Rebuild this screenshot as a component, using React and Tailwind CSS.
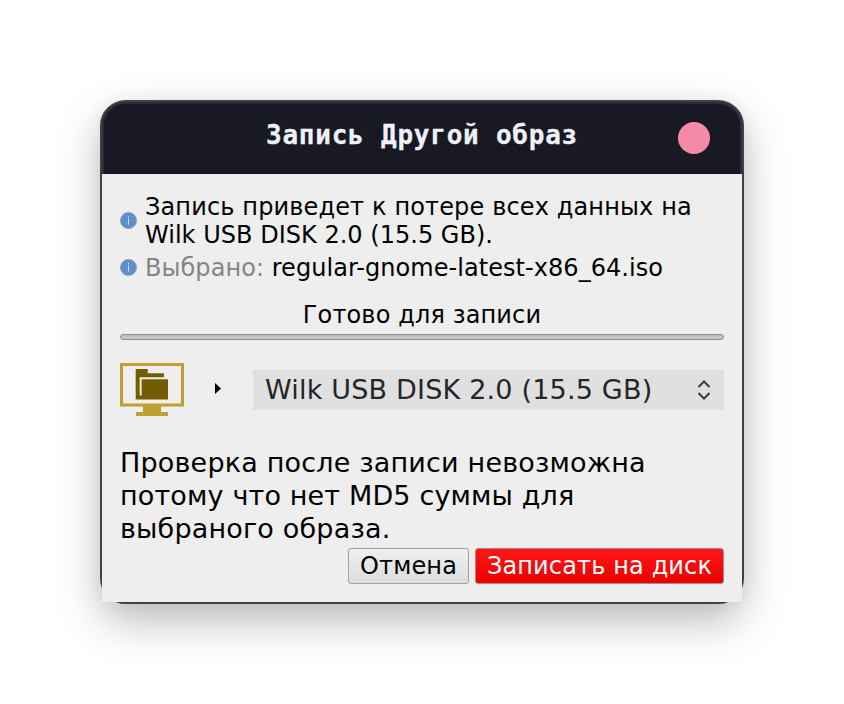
function InfoIcon() {
  return (
    <svg width="17" height="17" viewBox="0 0 17 17" className="-mt-[2px] shrink-0">
      <circle cx="8.5" cy="8.5" r="8" fill="#5e8fd3" stroke="#9b9b98" strokeWidth="1" />
      <rect x="8" y="4.2" width="1" height="1.2" fill="#e8eef7" />
      <rect x="8" y="6.6" width="1" height="6" fill="#d3dff0" />
    </svg>
  );
}

function ComputerIcon() {
  return (
    <svg width="64" height="53" viewBox="0 0 64 53" className="shrink-0">
      <rect x="1.5" y="1.5" width="61" height="40.5" fill="none" stroke="#bea02e" strokeWidth="3" />
      <path d="M23 43H41V49H48V53H16V49H23Z" fill="#bea02e" />
      <path d="M15.7 6H27.7V10.2H43.9V14.3H19.7V32.5H21.6V16.2H48V36.6H15.7Z" fill="#745c00" />
    </svg>
  );
}

export default function App() {
  return (
    <div className="h-[704px] w-[844px] overflow-hidden bg-white p-[100px]">
      <div className="h-[504px] w-[644px] rounded-[26px] border-2 border-[#3e3f48] bg-[#3e3f48] shadow-[0_18px_44px_rgba(0,0,0,0.26),0_2px_20px_rgba(0,0,0,0.06)]">
        <header className="flex h-[72px] items-center justify-between rounded-t-[24px] border-x-2 border-t-2 border-[#2b2c38] bg-[#191924] pr-[30px] pl-[162px]">
          <h1 className="-mt-[8px] font-['DejaVu_Sans_Mono',monospace] text-[26px] leading-[32px] font-bold tracking-[0.77px] whitespace-nowrap text-[#eff1f8] [-webkit-text-stroke:0.3px_#eff1f8]">
            Запись Другой образ
          </h1>
          <button aria-label="Закрыть" className="-mt-[2px] h-8 w-8 shrink-0 rounded-full bg-[#f38ba8]" />
        </header>

        <main className="h-[428px] bg-[#eeeeee] px-[18px] pt-[19px] font-['DejaVu_Sans',sans-serif] text-black">
          <div className="flex items-center gap-2 text-[24px] leading-[28px] whitespace-nowrap">
            <InfoIcon />
            <p className="tracking-[0.14px]">
              Запись приведет к потере всех данных на
              <br />
              <span className="tracking-[0.02px]">Wilk USB DISK 2.0 (15.5 GB).</span>
            </p>
          </div>
          <div className="mt-[5px] flex items-center gap-2 text-[24px] leading-[28px] tracking-[0.05px] whitespace-nowrap">
            <InfoIcon />
            <p>
              <span className="text-[#858585]">Выбрано:</span> regular-gnome-latest-x86_64.iso
            </p>
          </div>

          <p className="mt-[19px] text-center text-[24px] leading-[28px] tracking-[0.14px] whitespace-nowrap">
            Готово для записи
          </p>
          <div className="mt-[5px] h-[6px] rounded-[3px] border border-[#8e8e8e] bg-linear-to-b from-[#bababa] to-[#cacaca]" />

          <div className="mt-[23px] flex h-[53px] items-center">
            <ComputerIcon />
            <svg width="6" height="11" viewBox="0 0 6 11" className="-mt-[2px] ml-[31px] shrink-0">
              <path d="M0 0L6 5.5L0 11Z" fill="#000" />
            </svg>
            <div className="ml-8 flex h-10 w-[471px] shrink-0 items-center justify-between bg-[#e0e0e0] pr-[14px] pl-3 text-[27px] leading-[32px] tracking-[0.19px] whitespace-nowrap text-[#252629]">
              <span>Wilk USB DISK 2.0 (15.5 GB)</span>
              <svg width="12" height="20" viewBox="0 0 12 20" fill="none" stroke="#3b3b3b" strokeWidth="2">
                <path d="M0.5 7L6 1.5L11.5 7M0.5 13L6 18.5L11.5 13" />
              </svg>
            </div>
          </div>

          <p className="mt-[30px] text-[27px] leading-[33px] tracking-[0.18px] whitespace-nowrap">
            Проверка после записи невозможна
            <br />
            <span className="tracking-[0.15px]">потому что нет MD5 суммы для</span>
            <br />
            выбраного образа.
          </p>

          <div className="mt-[3px] flex justify-end gap-[6px] text-[24px] leading-[28px] tracking-[0.14px] whitespace-nowrap">
            <button className="h-9 w-[121px] rounded-[3px] border border-[#a0a0a0] bg-linear-to-b from-[#efefef] to-[#dddddd]">
              Отмена
            </button>
            <button className="h-9 w-[249px] rounded-[3px] border border-[#a58c8c] bg-linear-to-b from-[#ff1515] to-[#ea0000] text-white">
              Записать на диск
            </button>
          </div>
        </main>
      </div>
    </div>
  );
}
